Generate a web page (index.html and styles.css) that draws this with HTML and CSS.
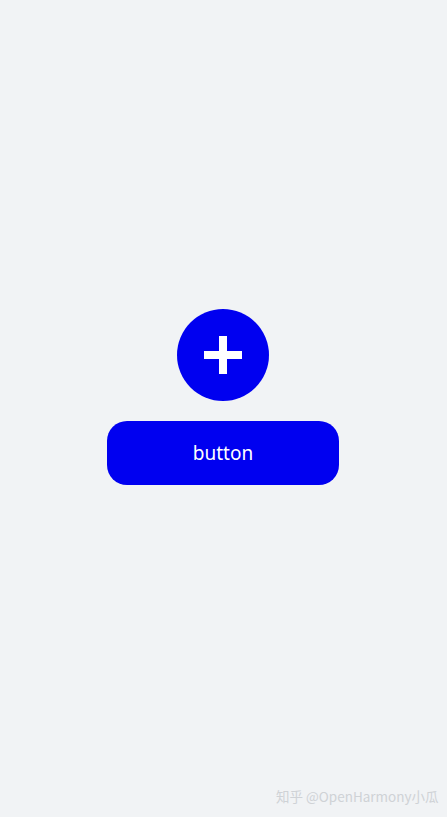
FILE: index.html
```html
<!DOCTYPE html>
<html>
<head>
<meta charset="utf-8">
<link rel="stylesheet" href="styles.css">
</head>
<body>
<main class="page">
  <div class="stack">
    <div class="fab">
      <svg width="38" height="38" viewBox="0 0 38 38"><rect x="15" y="0" width="8" height="38" fill="#fff"/><rect x="0" y="15" width="38" height="8" fill="#fff"/></svg>
    </div>
    <div class="btn">button</div>
  </div>
  <div class="watermark">知乎 @OpenHarmony小瓜</div>
</main>
</body>
</html>
```
FILE: styles.css
```css
html, body { margin: 0; padding: 0; }
body { background: #f1f3f5; font-family: "Noto Sans", "Noto Sans CJK SC", sans-serif; }
.page { position: relative; width: 447px; height: 817px; overflow: hidden; }
.stack { display: flex; flex-direction: column; align-items: center; gap: 20px; padding-top: 309px; padding-right: 1px; }
.fab { width: 92px; height: 92px; border-radius: 50%; background: #0000f0; display: flex; align-items: center; justify-content: center; }
.btn { width: 232px; height: 64px; border-radius: 20px; background: #0000f0; color: #fff; font-size: 19px; display: flex; align-items: center; justify-content: center; }
.watermark { position: absolute; left: 276px; top: 786px; font-size: 13.5px; letter-spacing: 0; color: #cfd2d6; white-space: nowrap; font-family: "Noto Sans CJK SC", sans-serif; }
```
